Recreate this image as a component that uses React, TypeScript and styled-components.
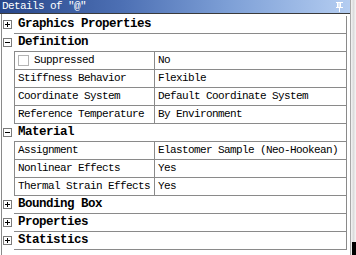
import React from "react";
import styled, { createGlobalStyle } from "styled-components";

const Global = createGlobalStyle`
  html, body { margin: 0; padding: 0; background: #ffffff; }
  body { font-family: "Liberation Mono", "DejaVu Sans Mono", monospace; }
`;

const Root = styled.div`
  display: flex;
  width: 356px;
  height: 255px;
  overflow: hidden;
  background: #ffffff;
`;

const Panel = styled.div`
  width: 350px;
  display: flex;
  flex-direction: column;
  border-right: 1px solid #a8a8a8;
`;

const TitleBar = styled.div`
  height: 13px;
  border-bottom: 1px solid #3a3a3a;
  background: linear-gradient(to right, #27468a 0%, #4d70b4 35%, #7d9fd6 65%, #b4cdf1 100%);
  display: flex;
  align-items: center;
  justify-content: space-between;
  padding: 0 7px 0 2px;
`;

const TitleText = styled.span`
  color: #ffffff;
  font-size: 11px;
  letter-spacing: -0.6px;
  line-height: 13px;
  white-space: pre;
`;

const Content = styled.div`
  flex: 1;
  margin-left: 1px;
  border-left: 1px solid #8a8a8a;
  padding-top: 2px;
  display: flex;
  flex-direction: column;
`;

const Row = styled.div`
  display: flex;
  width: 345px;
  height: 18px;
`;

const Gutter = styled.div`
  width: 12px;
  flex: none;
  display: flex;
  align-items: center;
  padding-left: 1px;
  box-sizing: border-box;
`;

const Toggle = styled.div<{ $open: boolean }>`
  position: relative;
  width: 9px;
  height: 9px;
  box-sizing: border-box;
  border: 1px solid #7a7a7a;
  background: #ffffff;
  margin-top: -1px;
  &::before {
    content: "";
    position: absolute;
    left: 1px;
    top: 3px;
    width: 5px;
    height: 1px;
    background: #000;
  }
  &::after {
    content: "";
    position: absolute;
    left: 3px;
    top: 1px;
    width: 1px;
    height: 5px;
    background: #000;
    display: ${(p) => (p.$open ? "none" : "block")};
  }
`;

const HeaderCell = styled.div`
  width: 333px;
  box-sizing: border-box;
  border-bottom: 1px solid #8a8a8a;
  border-right: 1px solid #8a8a8a;
  padding-left: 4px;
  font-size: 12.5px;
  letter-spacing: -0.5px;
  font-weight: bold;
  line-height: 17px;
  color: #000;
  white-space: pre;
`;

const NameCell = styled.div`
  width: 141px;
  box-sizing: border-box;
  border-left: 1px solid #8a8a8a;
  border-right: 1px solid #8a8a8a;
  border-bottom: 1px solid #8a8a8a;
  padding-left: 3px;
  display: flex;
  align-items: center;
  gap: 5px;
  font-size: 11px;
  letter-spacing: -0.6px;
  line-height: 17px;
  color: #000;
  white-space: pre;
`;

const ValueCell = styled.div`
  width: 192px;
  box-sizing: border-box;
  border-right: 1px solid #8a8a8a;
  border-bottom: 1px solid #8a8a8a;
  padding-left: 3px;
  font-size: 11px;
  letter-spacing: -0.6px;
  line-height: 17px;
  color: #000;
  white-space: pre;
`;

const CheckBox = styled.span`
  width: 11px;
  height: 11px;
  box-sizing: border-box;
  border: 1px solid #b4b4b4;
  background: #ffffff;
  flex: none;
`;

const Strip = styled.div`
  flex: 1;
  display: flex;
  flex-direction: column;
  justify-content: flex-end;
  background: linear-gradient(to right, #f4f4f4, #dcdcdc 50%, #f6f6f6);
`;

const StripBlack = styled.div`
  height: 13px;
  margin-left: 1px;
  background: #000;
`;

const Pin = () => (
  <svg width="7" height="10" viewBox="0 0 7 10">
    <rect x="0" y="0" width="7" height="1" fill="#fff" />
    <rect x="1" y="1" width="1" height="4" fill="#fff" />
    <rect x="4" y="1" width="1" height="4" fill="#fff" />
    <rect x="2" y="1" width="2" height="4" fill="#dfe9f7" />
    <rect x="0" y="5" width="7" height="1" fill="#fff" />
    <rect x="3" y="6" width="1" height="4" fill="#fff" />
  </svg>
);

type Item =
  | { kind: "header"; label: string; open: boolean }
  | { kind: "prop"; name: string; value: string; check?: boolean };

const items: Item[] = [
  { kind: "header", label: "Graphics Properties", open: false },
  { kind: "header", label: "Definition", open: true },
  { kind: "prop", name: "Suppressed", value: "No", check: true },
  { kind: "prop", name: "Stiffness Behavior", value: "Flexible" },
  { kind: "prop", name: "Coordinate System", value: "Default Coordinate System" },
  { kind: "prop", name: "Reference Temperature", value: "By Environment" },
  { kind: "header", label: "Material", open: true },
  { kind: "prop", name: "Assignment", value: "Elastomer Sample (Neo-Hookean)" },
  { kind: "prop", name: "Nonlinear Effects", value: "Yes" },
  { kind: "prop", name: "Thermal Strain Effects", value: "Yes" },
  { kind: "header", label: "Bounding Box", open: false },
  { kind: "header", label: "Properties", open: false },
  { kind: "header", label: "Statistics", open: false },
];

export default function App() {
  return (
    <>
      <Global />
      <Root>
        <Panel>
          <TitleBar>
            <TitleText>Details of "@"</TitleText>
            <Pin />
          </TitleBar>
          <Content>
            {items.map((it, i) =>
              it.kind === "header" ? (
                <Row key={i}>
                  <Gutter>
                    <Toggle $open={it.open} />
                  </Gutter>
                  <HeaderCell>{it.label}</HeaderCell>
                </Row>
              ) : (
                <Row key={i}>
                  <Gutter />
                  <NameCell>
                    {it.check && <CheckBox />}
                    {it.name}
                  </NameCell>
                  <ValueCell>{it.value}</ValueCell>
                </Row>
              )
            )}
          </Content>
        </Panel>
        <Strip>
          <StripBlack />
        </Strip>
      </Root>
    </>
  );
}
